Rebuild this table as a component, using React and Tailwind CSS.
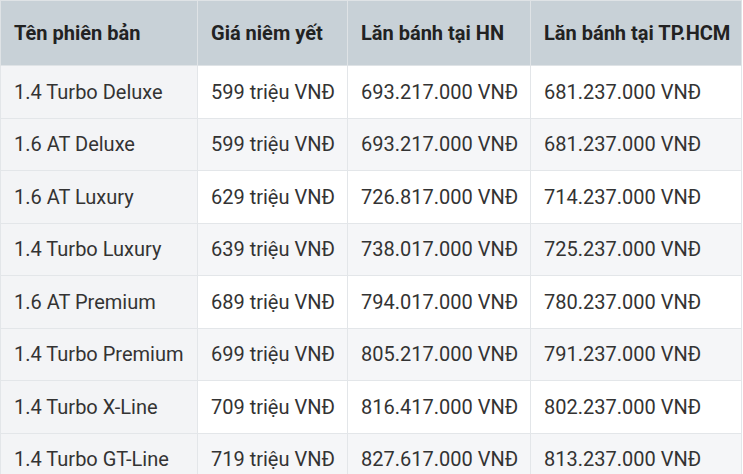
const rows = [
  ['1.4 Turbo Deluxe', '599 triệu VNĐ', '693.217.000 VNĐ', '681.237.000 VNĐ'],
  ['1.6 AT Deluxe', '599 triệu VNĐ', '693.217.000 VNĐ', '681.237.000 VNĐ'],
  ['1.6 AT Luxury', '629 triệu VNĐ', '726.817.000 VNĐ', '714.237.000 VNĐ'],
  ['1.4 Turbo Luxury', '639 triệu VNĐ', '738.017.000 VNĐ', '725.237.000 VNĐ'],
  ['1.6 AT Premium', '689 triệu VNĐ', '794.017.000 VNĐ', '780.237.000 VNĐ'],
  ['1.4 Turbo Premium', '699 triệu VNĐ', '805.217.000 VNĐ', '791.237.000 VNĐ'],
  ['1.4 Turbo X-Line', '709 triệu VNĐ', '816.417.000 VNĐ', '802.237.000 VNĐ'],
  ['1.4 Turbo GT-Line', '719 triệu VNĐ', '827.617.000 VNĐ', '813.237.000 VNĐ'],
];

const headers = ['Tên phiên bản', 'Giá niêm yết', 'Lăn bánh tại HN', 'Lăn bánh tại TP.HCM'];
const widths = ['w-[197px]', 'w-[150px]', 'w-[183px]', 'w-[211px]'];

export default function App() {
  return (
    <div className="w-[743px] h-[474px] overflow-hidden bg-white font-['Roboto',sans-serif]">
      <table className="w-[742px] table-fixed border-collapse text-[20px]">
        <thead>
          <tr className="bg-[#c8d1d7]">
            {headers.map((h, i) => (
              <th
                key={h}
                className={`${widths[i]} h-[65px] border border-[#dfe3e6] px-[13px] text-left font-bold text-[#222] whitespace-nowrap`}
              >
                {h}
              </th>
            ))}
          </tr>
        </thead>
        <tbody>
          {rows.map((r, ri) => (
            <tr key={r[0]} className={ri % 2 === 1 ? 'bg-[#f5f6f8]' : 'bg-white'}>
              {r.map((c, ci) => (
                <td
                  key={ci}
                  className={`h-[52.5px] border border-[#e3e6e9] px-[13px] text-[#333] whitespace-nowrap ${
                    ci === 0 ? 'bg-[#f3f4f6]' : ''
                  }`}
                >
                  {c}
                </td>
              ))}
            </tr>
          ))}
        </tbody>
      </table>
    </div>
  );
}
